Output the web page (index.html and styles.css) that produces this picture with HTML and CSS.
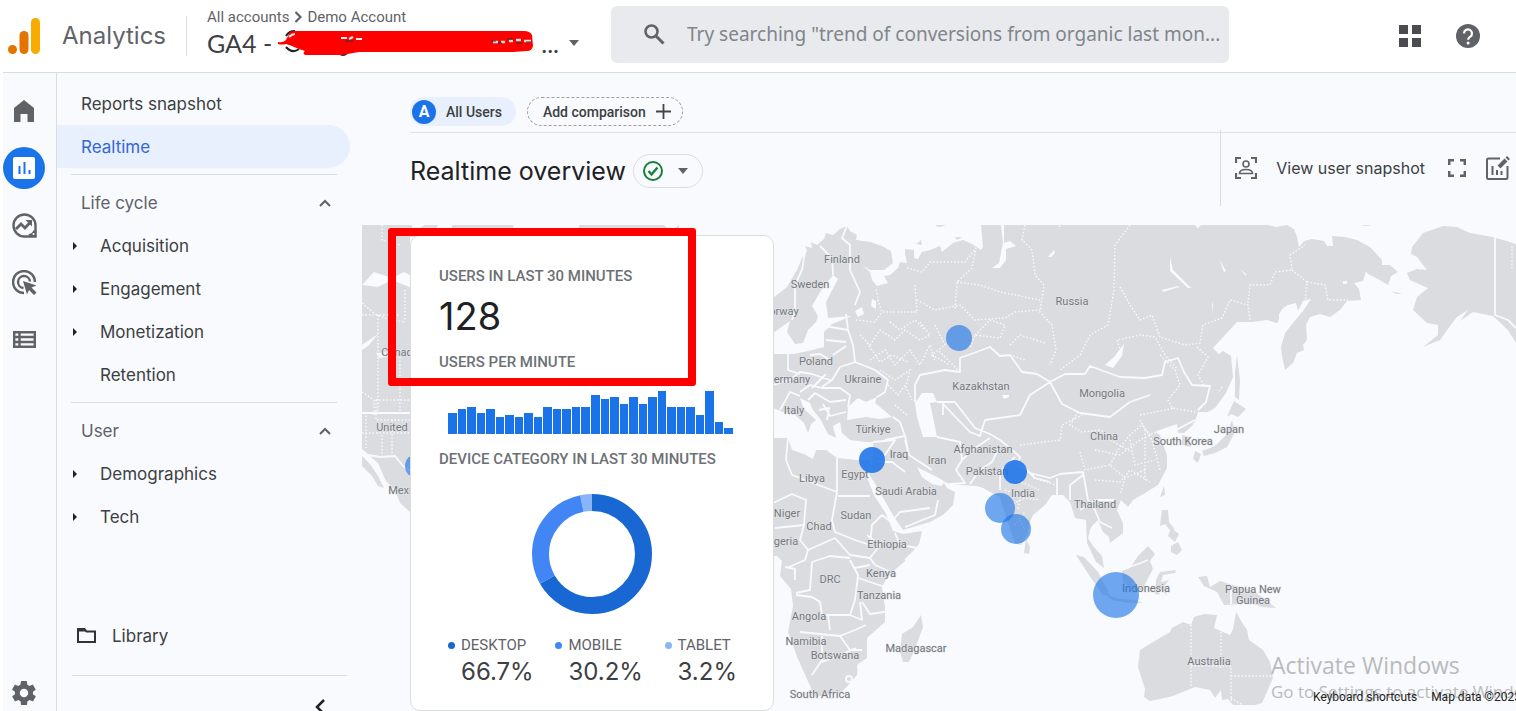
FILE: index.html
```html
<!DOCTYPE html>
<html lang="en">
<head>
<meta charset="utf-8">
<title>Analytics - Realtime overview</title>
<link rel="stylesheet" href="styles.css">
</head>
<body>
<header class="topbar">
  <svg class="logo" viewBox="0 0 32 36" aria-hidden="true"><rect x="23" y="0" width="9" height="36" rx="4.5" fill="#f9ab00"/><rect x="11.500" y="13" width="9" height="23" rx="4.500" fill="#e37400"/><circle cx="4.500" cy="31.500" r="4.500" fill="#e37400"/></svg>
  <span class="brand">Analytics</span>
  <div class="account">
    <nav class="crumbs" aria-label="Account">
      <a href="#">All accounts</a>
      <svg class="crumb-sep" viewBox="0 0 8 12" aria-hidden="true"><path d="M1.500 1 6.500 6l-5 5" fill="none" stroke="#5f6368" stroke-width="2.200"/></svg>
      <a href="#">Demo Account</a>
    </nav>
    <button class="property" type="button">
      <span>GA4 -</span>
      <svg class="scribble" viewBox="0 0 258 28" aria-hidden="true">
        <path d="M9 7q3-5 9-5M9 18q6 7 13 2M62 24q4 4 8 0" fill="none" stroke="#222" stroke-width="2"/>
        <path d="M1 13q5 1 8-2l4-8 4-1h230q6 0 8 4l1 11q-1 5-6 5l-14 1H82l-6 1-11 2H28q-3-2 0-4l-6-2q-9-4-13-5-5 1-8 0z" fill="#f00"/>
        <path d="M12 8q3-3 6-3M64 9h6m2 1 4-2m3 2 6 0" fill="none" stroke="#eee" stroke-width="2"/>
        <path d="M216 13h5m3 0h4m4-1h4m3-1h5m3 1h7" fill="none" stroke="#ddd" stroke-width="2.500"/>
        <path d="M214 12h5m2 2h4m5-4h6m3 4h6m4-1h5M68 12h8" fill="none" stroke="#333" stroke-width="1"/>
      </svg>
      <span>...</span>
      <svg class="caret" viewBox="0 0 10 6" aria-hidden="true"><path d="M0 0h10L5 6z" fill="#5f6368"/></svg>
    </button>
  </div>
  <form class="search" role="search">
    <svg viewBox="0 0 22 22" aria-hidden="true"><circle cx="8.500" cy="8.500" r="6" fill="none" stroke="#5f6368" stroke-width="2.500"/><path d="m13 13 7.500 7.500" stroke="#5f6368" stroke-width="3"/></svg>
    <input type="text" aria-label="Search" placeholder='Try searching "trend of conversions from organic last mon...'>
  </form>
  <div class="actions">
    <button type="button" aria-label="Apps"><svg width="22" height="22" viewBox="0 0 22 22"><path d="M0 0h9v9H0zM13 0h9v9h-9zM0 13h9v9H0zM13 13h9v9h-9z" fill="#4a4c50"/></svg></button>
    <button type="button" aria-label="Help"><svg width="24" height="24" viewBox="0 0 24 24"><circle cx="12" cy="12" r="12" fill="#5f6368"/><path d="M8 9.500a4 4 0 1 1 6.300 3.200c-1.500 1-2.200 1.600-2.200 3" fill="none" stroke="#fff" stroke-width="2.200"/><circle cx="12.100" cy="19" r="1.500" fill="#fff"/></svg></button>
  </div>
</header>
<div class="shell">
  <nav class="rail" aria-label="Sections">
    <a href="#" aria-label="Home"><svg width="20" height="22" viewBox="0 0 20 22"><path d="M10 0 20 8v14h-6.500v-8h-7v8H0V8z" fill="#5f6368"/></svg></a>
    <a href="#" class="on" aria-label="Reports"><svg width="22" height="22" viewBox="0 0 22 22"><rect width="22" height="22" rx="2" fill="#fff"/><path d="M6.500 9v8M11.500 5v12M16.500 13v4" stroke="#1a73e8" stroke-width="2"/></svg></a>
    <a href="#" aria-label="Explore"><svg width="25" height="25" viewBox="0 0 25 25" fill="none" stroke="#5f6368" stroke-width="2.400"><path d="M12.500 23.500a11 11 0 1 1 11-11v11z"/><path d="m4 16 5-5 4 4 5.500-6" stroke-width="2.800"/><path d="M13.500 7H20v6.500z" fill="#5f6368" stroke="none"/><path d="M17 22.500q4-1 6-5v5z" fill="#5f6368"/><circle cx="21.500" cy="21" r="1" fill="#fff" stroke="none"/></svg></a>
    <a href="#" aria-label="Advertising"><svg width="25" height="25" viewBox="0 0 25 25" fill="none" stroke="#5f6368" stroke-width="2.400"><path d="M12 23A11 11 0 1 1 23 12"/><path d="M11.500 18A6 6 0 1 1 18 11.500"/><path d="m11 11 13.500 4.500-5 2 5 5-2.500 2.500-5-5-2 4.500z" fill="#5f6368" stroke="none"/></svg></a>
    <a href="#" aria-label="Configure"><svg width="23" height="17" viewBox="0 0 23 17" fill="none" stroke="#5f6368" stroke-width="2.400"><path d="M1.200 1.200h20.600v14.600H1.200zM1 6h21M1 11h21M6.500 1v15"/></svg></a>
    <a href="#" class="gear" aria-label="Admin"><svg width="24" height="24" viewBox="2 2 20 20"><path fill="#5f6368" d="M19.400 13c0-.3.100-.6.100-1s0-.7-.1-1l2.100-1.600c.2-.2.200-.4.100-.6l-2-3.500c-.1-.2-.4-.3-.6-.2l-2.500 1c-.5-.4-1.100-.7-1.700-1l-.4-2.600c0-.3-.2-.5-.5-.5h-4c-.2 0-.4.200-.5.500l-.4 2.600c-.6.300-1.200.6-1.700 1l-2.500-1c-.2-.1-.5 0-.6.200l-2 3.500c-.1.200-.1.500.1.600L4.500 11c0 .3-.1.700-.1 1s0 .7.100 1l-2.100 1.600c-.2.200-.2.400-.1.600l2 3.500c.1.200.4.300.6.200l2.500-1c.5.400 1.100.7 1.700 1l.4 2.600c0 .3.200.5.500.5h4c.3 0 .5-.2.500-.5l.4-2.600c.6-.3 1.200-.6 1.700-1l2.500 1c.2.100.5 0 .6-.2l2-3.500c.1-.2.100-.5-.1-.6zM12 15.500a3.500 3.500 0 1 1 0-7 3.500 3.500 0 0 1 0 7z"/></svg></a>
  </nav>
  <nav class="sidebar" aria-label="Reports">
    <a class="item top" href="#">Reports snapshot</a>
    <a class="item top current" href="#">Realtime</a>
    <section class="group">
      <button class="item head" type="button">Life cycle <svg width="12" height="8" viewBox="0 0 12 8"><path d="m1 7 5-5 5 5" fill="none" stroke="#5f6368" stroke-width="2"/></svg></button>
      <a class="item sub more" href="#">Acquisition</a>
      <a class="item sub more" href="#">Engagement</a>
      <a class="item sub more" href="#">Monetization</a>
      <a class="item sub" href="#">Retention</a>
    </section>
    <section class="group">
      <button class="item head" type="button">User <svg width="12" height="8" viewBox="0 0 12 8"><path d="m1 7 5-5 5 5" fill="none" stroke="#5f6368" stroke-width="2"/></svg></button>
      <a class="item sub more" href="#">Demographics</a>
      <a class="item sub more" href="#">Tech</a>
    </section>
    <a class="item library" href="#"><svg width="19" height="15" viewBox="0 0 19 15"><path d="M1 13V1h6.500l2 2.500H18V14H1z" fill="none" stroke="#333" stroke-width="2"/><path d="M1 1h6.500l2 2.500H1z" fill="#333"/></svg>Library</a>
    <div class="fold"><button type="button" aria-label="Collapse menu"><svg width="10" height="16" viewBox="0 0 10 16"><path d="M9 1 2 8l7 7" fill="none" stroke="#202124" stroke-width="2.500"/></svg></button></div>
  </nav>
  <main class="main">
    <div class="compare">
      <button class="chip all" type="button"><b>A</b>All Users</button>
      <button class="chip add" type="button">Add comparison <svg width="15" height="15" viewBox="0 0 15 15"><path d="M7.500 0v15M0 7.500h15" stroke="#444" stroke-width="1.800"/></svg></button>
    </div>
    <div class="titlebar">
      <h1>Realtime overview</h1>
      <button class="status" type="button" aria-label="Data status">
        <svg width="22" height="22" viewBox="0 0 22 22" fill="none" stroke="#188038" stroke-width="2"><circle cx="11" cy="11" r="9"/><path d="m6.500 11 3 3.500 6-7" stroke-width="2.400"/></svg>
        <svg class="caret" viewBox="0 0 10 6"><path d="M0 0h10L5 6z" fill="#5f6368"/></svg>
      </button>
      <div class="tools">
        <button type="button"><svg width="22" height="22" viewBox="0 0 22 22" fill="none" stroke="#5f6368" stroke-width="2.200"><path d="M1 6V1h5M16 1h5v5M21 16v5h-5M6 21H1v-5"/><circle cx="11" cy="7" r="3" stroke-width="1.600"/><path d="M4.500 16.500q0-4 6.500-4t6.500 4z" stroke-width="1.600"/></svg>View user snapshot</button>
        <button type="button" aria-label="Full screen"><svg width="18" height="18" viewBox="0 0 18 18" fill="none" stroke="#5f6368" stroke-width="2.500"><path d="M1.200 6V1.200H6M12 1.200h4.800V6M16.800 12v4.800H12M6 16.800H1.200V12"/></svg></button>
        <button type="button" aria-label="Edit report"><svg width="24" height="24" viewBox="0 0 24 24" fill="none" stroke="#5f6368" stroke-width="2"><path d="M14 2.500H2.500q-1.500 0-1.500 1.500v17.500q0 1.500 1.500 1.500H20q1.500 0 1.500-1.500V10"/><path d="M6.500 10v9M11 14v5M15.500 15v4"/><path d="m13 11 7-7" stroke-width="4"/><path d="m21 3 1.500-1.500" stroke-width="4"/></svg></button>
      </div>
    </div>
    <div class="stage">
      <svg class="map" viewBox="362 225 1154 486" preserveAspectRatio="xMinYMin slice" role="img" aria-label="Users by location">
        <g class="land">
          <path d="M362 225h50v6h4l8-6h14l-6 12h20v-12h62l-6 12h71v-12h85l6 6 9-6v12H410v275l-10-9-5-13-9-9-8-18-16-14zM362 456l8 8 8 12 6 12-6-2-6-10-10-10z"/>
          <path d="M773 298 787 287 797 270 802 258 807 251 805 246 812 248 811 242 817 245 824 239 826 233 833 235 840 229 847 226 850 231 857 235 856 240 870 242 882 246 891 251 893 263 884 270 870 270 862 265 870 272 872 280 877 286 888 283 884 276 890 275 898 268 900 262 907 263 905 254 905 249 914 250 914 258 918 259 922 252 930 250 940 246 942 252 953 243 963 240 972 244 981 250 983 247 981 225H1001L1003 243 999 263 992 268 1000 268 1006 260 1006 249 1016 246 1010 241 1004 243V225H1195L1198 228 1201 225H1268L1276 227 1287 225 1294 229 1297 237 1299 247 1304 241 1312 239 1324 241 1327 246 1333 246 1332 236 1345 237 1357 240 1370 247 1382 260 1382 265 1390 265 1398 272 1391 276 1388 285 1378 279 1368 274 1366 271 1363 281 1354 283 1359 289 1361 300 1347 301 1340 310 1330 317 1320 314 1310 317 1306 325 1307 340 1303 345 1304 350 1297 353 1293 363 1285 370 1282 356 1281 347 1285 333 1297 318 1303 311 1311 299 1303 301 1298 311 1296 303 1288 305 1283 308 1279 314 1279 319 1277 323 1267 320 1252 322 1237 322 1225 335 1213 348 1219 354 1223 351 1231 356 1233 377 1226 393 1215 408 1208 412 1198 412 1195 421 1192 426 1184 433 1178 433 1177 424 1165 428 1155 432 1160 435 1164 447 1167 455 1167 468 1158 485 1145 493 1133 500 1128 507 1121 500 1117 510 1123 523 1123 533 1110 543 1109 537 1103 532 1098 520 1092 526 1090 530 1088 538 1093 546 1102 556 1104 568 1096 562 1087 543 1086 520 1075 518 1070 502 1063 495 1052 495 1045 505 1033 515 1029 524 1028 533 1021 545 1015 543 1008 523 1000 497 990 492 983 488 977 486 960 485 947 483 937 477 923 470 917 467 922 477 932 484 941 486 944 483 947 488 955 492 953 505 943 515 930 522 903 530 898 523 890 510 877 487 869 474 874 458 873 442 867 442 850 440 842 433 840 422 833 426 836 438 828 434 821 420 813 410 810 403 800 398 804 409 816 420 811 424 808 433 804 423 793 413 783 412 773 408z"/>
          <path d="M773 438h15l4 12 12 4 9 5 3-9 10 0 11 8 20 2 13 0 0 12-6-2 10 25 12 19 7 17 10 3 19-3-3 13-14 17-17 15-6 11 3 20 0 15-18 16 0 20-9 6-1 11-15 17-27 5-8-18-9-20-10-27 5-26-2-17-11-13 2-15-5-5h-9zM921 615l2 12-8 22-6 13h-6l-3-10 2-18 11-7zM1026 539l4 8-1 7-5-1z"/>
          <path d="M1076 555l8 2 14 15 8 15 4 9-7-1-14-20zM1106 595l14 4 14 1 8 3-14 0-16-3zM1122 571l8-3 8-12 10-10 7 8-5 7 3 8-8 15-3 8-9-3-10-6zM1160 572l16-2-1 3-12 2-2 7 8-2-5 6 3 10-7-8-1 7-4-1 1-14zM1198 577l9-1 3 11 10-6 16 5 16 4 14 10 10 8-14-1-13-5-9 2-16 1-7-13-13-6zM1162 510h6l1 12 6 8-5 0-5-6-5 2 1-9zM1164 486l1 9-5 2zM1171 528l8 6-4 8-7-6zM1171 546l7-4 4 8-5 5-6-3zM1237 355l3 25-1 20-4-3 0-25zM1234 401l12 8-8 8-7-3-4 3zM1232 420l3 12-8 15-12 6-11 3-2-5 13-5 12-12zM1195 451l6 3-3 9-5-4zM1182 435l8 2 1 10-9-2z"/>
          <path d="M1140 650 1153 642 1170 632 1172 628 1183 622 1191 625 1194 617 1204 614 1217 615 1214 628 1230 635 1233 629 1236 612 1243 624 1247 630 1249 640 1263 650 1270 662 1273 678 1262 703 1255 705H1233L1228 699 1222 700 1221 690 1215 698 1210 690 1195 687 1173 696 1160 699 1150 701 1144 697 1145 689 1138 667z"/>
          <path d="M1412 247 1423 233 1443 226 1457 227 1470 233 1493 237 1516 244V343L1508 330 1493 316 1473 312 1460 321 1468 310 1457 317 1450 326 1440 340 1423 347 1438 335 1438 325 1427 323 1413 310 1417 297 1428 288 1410 280 1407 273 1417 269 1427 270 1417 257 1411 254zM1360 225h12l-6 1zM1392 291l10 3-6 0zM935 226l6-3 5 2-6 2zM916 244l5-4 1 5zM955 237l7 0-5 3z"/>
        </g>
        <g class="water">
          <path d="M833 275 838 279 826 302 828 318 852 316 832 324 824 332 824 347 808 351 794 354 773 354V333L790 321 787 332 795 344 803 343 808 330 816 322 818 316 812 306 820 292z"/>
          <path d="M922 393h11l4 9-7 1 3 14 4 20-14 0-6-20-2-14zM858 398l8 4 11-5-2 6 5 4 12 10-12 2-14-2-19 3 1-13zM1105 365l9-8 10-13-2 12-9 12zM855 311l7-4 2 7-6 3zM872 299l4 2 0 8-5-3zM1048 257l6-7 1 3-4 4zM1002 395l7 0 0 2-5 2zM1060 225l-2 2 3 0zM362 285l16 2 14-7 20 8v-12l-8-4-12 6-18-6zM362 345l16-11-10 12-6 4zM376 353l18-1v4l-15 2z"/>
          <path d="M1170 257l3 13 18 18-3 0-18-17zM1162 290l16-4 1 1-16 5zM1219 259l7 12-2 1zM1240 269l6 5 0 2zM1212 305l1-4 0 12zM1343 281h4v3h-4z"/>
        </g>
        <g class="border">
          <path d="M847 226 842 238 850 245 850 270 860 292 855 305M820 246 832 258 833 275M805 252 802 270 795 285 795 310 792 320M846 314 848 330 853 345 855 362 840 367 832 380 822 387M825 326 848 330M826 340 846 342M833 355 846 346M810 355 820 354 830 360M855 362 875 370 888 380 885 392 877 397M773 385 790 380 800 372 812 374 830 380M788 350 788 370 800 374M800 392 810 385 822 388 840 388 850 395 848 407M808 400 815 393 830 402 846 400M823 404 830 416 846 412M812 388 826 374M819 410 829 408 827 420M780 410 790 392 800 396M885 440 905 436 909 455 932 470M905 436 900 422 893 417M873 442 895 440 885 455 877 457M878 462 892 462 905 472M909 455 905 440M937 437 960 442 962 460 956 470 965 483 950 484M915 402 915 385 920 375 945 370 960 372 960 358 990 347 1000 356 1010 355 1022 372 1037 374 1050 382M1050 382 1030 395 1020 415 985 420 980 436 970 432 943 404 943 415M1050 382 1062 404 1080 413 1110 417 1130 402 1150 395M1050 382 1065 374 1085 374 1090 366 1120 377 1145 378 1162 375 1165 362 1178 358 1184 372 1192 385 1210 386 1206 402 1198 410M937 402 955 402 975 428 990 434M990 434 1000 440 1010 448 1020 457 1018 465 1030 473 1050 478 1060 474 1083 472 1088 500 1095 510M962 460 975 448 990 438M970 484 980 470 992 462 1000 445M1000 490 1000 472 1015 457M1022 465 1035 478 1050 482M1057 478 1057 498M1070 500 1070 485 1083 475M1080 510 1095 500 1115 500M1095 510 1100 522 1112 528M1176 430 1195 420M1495 237V315L1508 320 1516 328"/>
          <path d="M788 438 786 460 792 475 837 492 837 458M838 496H870M837 492 832 520 835 532 855 540 870 545M773 503 792 494 806 500 804 525 775 528M804 525 800 540 808 550 835 538M808 550 805 560 787 568M835 538 850 555 870 558 880 545M870 545 872 525 882 515 895 525M880 545 867 535M895 533 900 545 918 548 905 560M870 558 875 565 893 573M812 562 810 590 796 593M796 595 812 597 820 602 822 615 850 615M850 560 858 575 855 600 850 615M855 568 870 565M858 578 888 588M890 611 870 614 862 602M800 632 840 636 855 630M828 615 830 630M840 636 850 650 862 650M855 630 866 625M822 636V660L812 675M822 662 840 655 856 648M850 615 862 620 860 602M785 567 795 569 795 580M905 527 935 515 938 500M893 520 900 512 930 508M812 562 830 556 850 558"/>
          <circle cx="849" cy="679" r="3"/><circle cx="860" cy="667" r="2"/>
          <path d="M1126 568 1138 564 1148 560M1231 580V604M362 413H410"/>
        </g>
        <g class="region">
          <path d="M907 268 922 272 930 262 965 262 976 248 972 268 957 282 955 310M957 282 980 285 1000 292 1040 300M915 285 917 312 882 312 878 300 876 288M917 300 935 310 960 305 975 320 1005 318 1015 312 1040 310M1025 225 1022 240 1032 250 1035 275 1044 285 1040 312 1052 325 1056 350 1050 365M1130 225 1115 245 1114 290 1108 325 1090 335 1080 355 1060 370M1120 287 1130 305 1140 320 1152 315 1160 337 1185 345 1200 343 1203 325 1222 318 1230 300 1248 305 1250 320M1248 303 1250 285 1270 285 1275 272 1292 270 1290 255 1305 245M1292 270 1307 282 1305 305M1307 282 1325 285 1328 300 1348 300M1122 355 1117 340 1140 335 1155 337 1165 355 1178 370M1197 347 1208 357 1198 375 1205 387M1222 387 1218 393M856 320 875 322 882 312M860 335 870 345 880 330 895 340 905 330 920 340 930 335 920 322M870 360 885 350 895 365 910 350 920 365 930 345 935 362M880 370 895 380 910 370 905 390M888 385 898 395 905 385 912 400M935 325 945 345 932 355 950 365M960 372 938 350M975 335 990 320 1005 325 1000 338 975 335 970 348M1010 345 1020 335 1045 343M1010 355 1025 360M890 322 900 330 915 320 925 330M895 405 907 415M865 340 880 362 892 355 908 362"/>
          <path d="M1020 445 1060 440 1062 425 1082 415M1078 412 1070 425 1082 432 1100 430 1120 440M1095 450 1120 455 1140 440 1160 430M1080 452 1085 470 1110 465 1125 478 1145 470M1110 465 1118 450 1130 435 1142 425 1150 435M1125 478 1120 495M1130 440 1135 465 1155 460M1145 430 1145 480M1110 440 1132 452M1160 355 1175 370 1180 385 1168 400 1172 408 1195 412M1140 415 1175 408M1140 420 1152 440 1160 470M1015 480 1028 485 1040 490M1010 505 1025 498 1040 500M1015 525 1025 512M1005 490 1020 495 1018 510M1020 520 1025 530M1033 478 1060 486M1095 480 1120 482 1130 470 1150 482M1191 625V687M1221 632V668M1191 666H1231V705M1231 676H1272M1231 698 1243 705M1512 246V270M362 303 375 314 390 320 405 322M382 225V240L400 245M362 315H400M378 315V412M362 392 374 400 374 415M376 400H410M376 400V420H410M362 433H410M382 435V455M366 412V448M405 290V322M392 420V455M400 350V412"/>
        </g>
        <path class="border" d="M362 454 380 457 395 456 403 466 412 472"/>
        <g class="label">
          <text x="842" y="263">Finland</text><text x="810" y="288">Sweden</text><text x="784" y="315">orway</text><text x="816" y="365">Poland</text><text x="792" y="383">ermany</text><text x="863" y="383">Ukraine</text><text x="794" y="414">Italy</text><text x="873" y="433">Türkiye</text><text x="899" y="458">Iraq</text><text x="937" y="464">Iran</text><text x="983" y="453">Afghanistan</text><text x="987" y="475">Pakistan</text><text x="981" y="390">Kazakhstan</text><text x="1072" y="305">Russia</text><text x="1102" y="397">Mongolia</text><text x="1104" y="440">China</text><text x="1183" y="445">South Korea</text><text x="1229" y="433">Japan</text><text x="1023" y="497">India</text><text x="1095" y="508">Thailand</text><text x="906" y="495">Saudi Arabia</text><text x="855" y="478">Egypt</text><text x="812" y="482">Libya</text><text x="856" y="519">Sudan</text><text x="787" y="517">Niger</text><text x="819" y="530">Chad</text><text x="786" y="545">geria</text><text x="887" y="548">Ethiopia</text><text x="830" y="583">DRC</text><text x="881" y="577">Kenya</text><text x="879" y="599">Tanzania</text><text x="809" y="620">Angola</text><text x="806" y="645">Namibia</text><text x="835" y="659">Botswana</text><text x="916" y="652">Madagascar</text><text x="820" y="698">South Africa</text><text x="1146" y="592">Indonesia</text><text x="1253" y="593">Papua New</text><text x="1253" y="604">Guinea</text><text x="1209" y="665">Australia</text><text x="400" y="356">Canada</text><text x="392" y="431">United</text><text x="406" y="494">Mexico</text>
        </g>
        <g class="users">
          <circle cx="959" cy="338" r="13"/><circle class="strong" cx="872" cy="460" r="13"/><circle class="strong" cx="1015" cy="472" r="12"/><circle cx="1000" cy="508" r="15"/><circle cx="1016" cy="529" r="15"/><circle cx="1116" cy="595" r="23"/><circle cx="417" cy="466" r="12"/>
        </g>
      </svg>
      <section class="card">
        <h2>USERS IN LAST 30 MINUTES</h2>
        <p class="total">128</p>
        <h2>USERS PER MINUTE</h2>
        <div class="bars" role="img" aria-label="Users per minute">
          <i style="height:21px"></i><i style="height:25px"></i><i style="height:27px"></i><i style="height:21px"></i><i style="height:25px"></i><i style="height:17px"></i><i style="height:19px"></i><i style="height:17px"></i><i style="height:21px"></i><i style="height:17px"></i><i style="height:27px"></i><i style="height:25px"></i><i style="height:25px"></i><i style="height:27px"></i><i style="height:27px"></i><i style="height:39px"></i><i style="height:35px"></i><i style="height:37px"></i><i style="height:30px"></i><i style="height:37px"></i><i style="height:30px"></i><i style="height:37px"></i><i style="height:43px"></i><i style="height:27px"></i><i style="height:27px"></i><i style="height:27px"></i><i style="height:19px"></i><i style="height:43px"></i><i style="height:12px"></i><i style="height:6px"></i>
        </div>
        <h2>DEVICE CATEGORY IN LAST 30 MINUTES</h2>
        <svg class="donut" viewBox="0 0 120 120" role="img" aria-label="Device category">
          <g fill="none" stroke-width="17" transform="rotate(-90 60 60)">
            <circle cx="60" cy="60" r="51.500" stroke="#1967d2" pathLength="100" stroke-dasharray="66.700 100"/>
            <circle cx="60" cy="60" r="51.500" stroke="#4285f4" pathLength="100" stroke-dasharray="30.200 100" stroke-dashoffset="-66.700"/>
            <circle cx="60" cy="60" r="51.500" stroke="#8ab4f8" pathLength="100" stroke-dasharray="3.200 100" stroke-dashoffset="-96.800"/>
          </g>
        </svg>
        <dl class="legend">
          <div class="desktop"><dt>DESKTOP</dt><dd>66.7%</dd></div>
          <div class="mobile"><dt>MOBILE</dt><dd>30.2%</dd></div>
          <div class="tablet"><dt>TABLET</dt><dd>3.2%</dd></div>
        </dl>
      </section>
      <div class="highlight"></div>
      <div class="watermark"><p>Activate Windows</p><p>Go to Settings to activate Windows.</p></div>
      <div class="credits"><a href="#">Keyboard shortcuts</a><span>Map data ©2023</span></div>
    </div>
  </main>
</div>
</body>
</html>
```
FILE: styles.css
```css
* { box-sizing: border-box; }
body {
  margin: 0;
  height: 100vh;
  display: flex;
  flex-direction: column;
  overflow: hidden;
  background: #fff;
  color: #3c4043;
  font-family: Inter, "Open Sans", sans-serif;
}
a { color: inherit; text-decoration: none; }
button { font: inherit; color: inherit; background: none; border: 0; padding: 0; cursor: pointer; }
h1, h2, p, dl, dd { margin: 0; }
h1, h2 { font-weight: 400; }
svg { flex: none; }

.topbar { height: 72px; flex: none; display: flex; align-items: center; padding-left: 8px; }
.logo { width: 32px; height: 36px; }
.brand { width: 147px; height: 40px; line-height: 40px; padding-left: 22px; border-right: 1px solid #dadce0; font-size: 24px; color: #5f6368; }
.account { width: 404px; padding-left: 20px; margin-bottom: 6px; font-family: Roboto, sans-serif; }
.crumbs { display: flex; align-items: center; gap: 5px; font-size: 15px; line-height: 20px; color: #5f6368; }
.crumb-sep { width: 8px; height: 12px; }
.property { display: flex; align-items: center; font-family: Lato, sans-serif; font-size: 25px; line-height: 32px; color: #3c4043; white-space: nowrap; }
.scribble { width: 258px; height: 28px; margin: 0 6px 0 5px; }
.caret { width: 10px; height: 6px; }
.property .caret { margin-left: 10px; }
.search { flex: 1; height: 57px; display: flex; align-items: center; gap: 22px; margin: 0 170px 4px 20px; padding-left: 32px; background: #e8eaed; border-radius: 6px; }
.search svg { width: 22px; height: 22px; }
.search input { flex: 1; min-width: 0; border: 0; padding: 0; background: none; outline: 0; font: 19px "Noto Sans", sans-serif; text-overflow: ellipsis; }
.search input::placeholder { color: #80868b; opacity: 1; }
.actions { display: flex; gap: 35px; margin-right: 36px; }
.actions button { display: flex; align-items: center; }

.shell { flex: 1; min-height: 0; display: flex; margin-left: 3px; background: #f8fafd; border-top: 1px solid #dadce0; }
.rail { width: 54px; flex: none; display: flex; flex-direction: column; gap: 15px; padding: 17px 0; border-right: 1px solid #dadce0; }
.rail a { width: 42px; height: 42px; flex: none; display: grid; place-items: center; border-radius: 50%; }
.rail .on { background: #1a73e8; }
.rail .gear { margin-top: auto; margin-bottom: -20px; }

.sidebar { width: 293px; flex: none; display: flex; flex-direction: column; padding-top: 9px; }
.item { display: flex; align-items: center; height: 43px; flex: none; font-size: 17px; color: #3c4043; }
.top { padding-left: 24px; }
.current { background: #e8f0fe; color: #3367d6; border-radius: 0 22px 22px 0; }
.group { margin: 6px 13px 0 14px; border-top: 1px solid #dadce0; padding-top: 6px; }
.head { width: 100%; justify-content: space-between; padding: 0 6px 0 10px; color: #5f6368; }
.sub { padding-left: 29px; }
.more { padding-left: 2px; gap: 23px; }
.more::before { content: ""; border-left: 4px solid #202124; border-top: 4px solid transparent; border-bottom: 4px solid transparent; }
.library { margin: auto 0 18px 20px; gap: 16px; }
.fold { height: 36px; margin: 0 3px 0 15px; padding: 23px 22px 0 0; border-top: 1px solid #dadce0; text-align: right; }

.main { flex: 1; min-width: 0; display: flex; flex-direction: column; padding-left: 12px; }
.compare { display: flex; gap: 11px; padding: 24px 0 6px; margin-left: 48px; border-bottom: 1px solid #dfe1e5; }
.chip { display: flex; align-items: center; height: 29px; font: 500 14px Roboto, sans-serif; border-radius: 15px; }
.all { gap: 10px; padding: 0 14px 0 2px; background: #e8f0fe; }
.all b { width: 24px; line-height: 24px; border-radius: 50%; background: #1a73e8; color: #fff; font-size: 16px; }
.add { gap: 10px; padding: 0 11px 0 15px; border: 1px dashed #9aa0a6; }
.titlebar { display: flex; align-items: center; height: 92px; flex: none; padding-left: 48px; }
h1 { font-size: 25px; line-height: 32px; color: #202124; padding-bottom: 16px; }
.status { display: flex; align-items: center; gap: 14px; height: 34px; margin: 0 0 16px 7px; padding: 0 14px 0 8px; border: 1px solid #dadce0; border-radius: 17px; }
.tools { display: flex; align-items: center; gap: 23px; height: 76px; margin: 0 6px 22px auto; padding-left: 14px; border-left: 1px solid #dadce0; font-size: 16px; }
.tools button { display: flex; align-items: center; gap: 19px; white-space: nowrap; }
.tools button:last-child { margin-left: -3px; }

.stage { flex: 1; min-height: 0; position: relative; overflow: hidden; padding: 10px 0 0 48px; }
.map { position: absolute; inset: 0; width: 100%; height: 100%; }
.land { fill: #dadce0; }
.water { fill: #f8fafd; }
.border { fill: none; stroke: #f8fafd; stroke-width: 1.8; stroke-linejoin: round; }
.region { fill: none; stroke: #f8fafd; stroke-width: 1.4; stroke-dasharray: 1.500 2; }
.label { font: 11px Roboto, sans-serif; fill: #74787d; text-anchor: middle; stroke: #e4e6e9; stroke-width: 1px; paint-order: stroke; }
.users { fill: #1a73e8; fill-opacity: .62; }
.users .strong { fill-opacity: .88; }

.card { position: relative; width: 364px; height: 476px; padding: 29px 28px 0; background: #fff; border: 1px solid #dadce0; border-radius: 10px; }
.card h2 { font: 500 15px/22px Roboto, sans-serif; color: #6d7175; white-space: nowrap; }
.total { font-size: 38px; line-height: 44px; color: #202124; padding: 7px 0 13px; }
.bars { display: flex; align-items: flex-end; gap: 1px; height: 43px; width: 285px; margin: 18px 0 14px 9px; }
.bars i { flex: 1; background: #1a73e8; }
.donut { display: block; width: 120px; height: 120px; margin: 24px auto 20px; }
.legend { display: flex; justify-content: space-between; padding: 0 8px 0 9px; }
.legend dt { display: flex; align-items: center; gap: 6px; font: 15px/22px Roboto, sans-serif; color: #5f6368; }
.legend dt::before { content: ""; width: 7px; height: 7px; border-radius: 50%; background: #1967d2; }
.mobile dt::before { background: #4285f4; }
.tablet dt::before { background: #8ab4f8; }
.legend dd { padding-left: 13px; font-size: 24px; line-height: 32px; }

.highlight { position: absolute; left: 26px; top: 3px; width: 308px; height: 158px; border: 8px solid #f00; border-radius: 3px; }
.watermark { position: absolute; right: 0; bottom: 7px; width: 245px; white-space: nowrap; color: #b8babd; font-family: "Open Sans", sans-serif; font-size: 17px; line-height: 24px; }
.watermark p:first-child { font-size: 23px; line-height: 30px; }
.credits { position: absolute; right: -5px; bottom: 6px; display: flex; gap: 14px; font: 12px/16px Roboto, sans-serif; color: #222; }
```
